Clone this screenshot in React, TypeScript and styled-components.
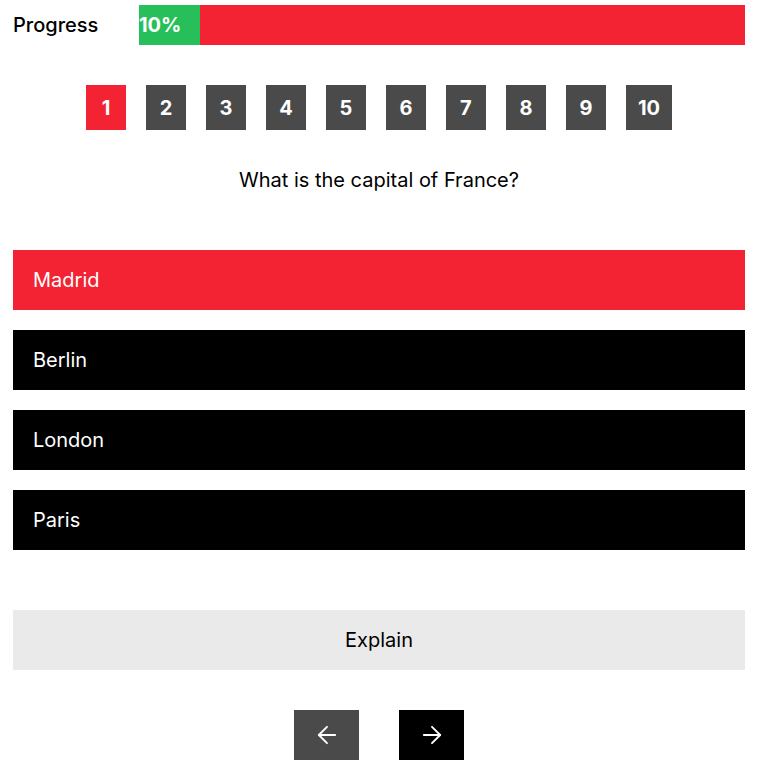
import React from "react";
import styled, { createGlobalStyle } from "styled-components";

const Global = createGlobalStyle`
  html, body { margin: 0; padding: 0; background: #fff; }
  body { font-family: Inter, "Noto Sans", sans-serif; color: #000; }
`;

const Page = styled.div`
  width: 732px;
  margin-left: 13px;
  padding-top: 5px;
  display: flex;
  flex-direction: column;
`;

const ProgressRow = styled.div`
  display: flex;
  align-items: center;
  height: 40px;
`;

const ProgressLabel = styled.div`
  width: 126px;
  font-size: 20px;
  font-weight: 500;
`;

const Track = styled.div`
  flex: 1;
  height: 40px;
  background: #f42333;
  display: flex;
`;

const Fill = styled.div`
  background: #26bf5a;
  height: 100%;
  color: #fff;
  font-weight: 700;
  font-size: 20px;
  display: flex;
  align-items: center;
  white-space: nowrap;
`;

const Numbers = styled.div`
  display: flex;
  justify-content: center;
  gap: 20px;
  margin-top: 40px;
`;

const NumBtn = styled.div<{ $active?: boolean }>`
  min-width: 40px;
  height: 45px;
  padding: 0 12px;
  box-sizing: border-box;
  background: ${(p) => (p.$active ? "#f42333" : "#4a4a4a")};
  color: #fff;
  font-weight: 700;
  font-size: 20px;
  display: flex;
  align-items: center;
  justify-content: center;
`;

const Question = styled.div`
  text-align: center;
  font-size: 20px;
  margin-top: 38px;
  line-height: 24px;
`;

const Options = styled.div`
  display: flex;
  flex-direction: column;
  gap: 20px;
  margin-top: 58px;
`;

const Option = styled.div<{ $selected?: boolean }>`
  height: 60px;
  background: ${(p) => (p.$selected ? "#f42333" : "#000")};
  color: #fff;
  font-size: 20px;
  display: flex;
  align-items: center;
  padding-left: 20px;
`;

const Explain = styled.div`
  height: 60px;
  margin-top: 60px;
  background: #eaeaea;
  font-size: 20px;
  display: flex;
  align-items: center;
  justify-content: center;
`;

const Nav = styled.div`
  display: flex;
  justify-content: center;
  gap: 40px;
  margin-top: 40px;
`;

const NavBtn = styled.div<{ $dark?: boolean }>`
  width: 65px;
  height: 50px;
  background: ${(p) => (p.$dark ? "#000" : "#4a4a4a")};
  display: flex;
  align-items: center;
  justify-content: center;
`;

const Arrow = ({ dir }: { dir: "left" | "right" }) => (
  <svg width="28" height="28" viewBox="0 0 24 24" fill="none" stroke="#fff" strokeWidth="1.6" strokeLinecap="round" strokeLinejoin="round">
    {dir === "left" ? (
      <>
        <path d="M19 12H5" />
        <path d="M12 19l-7-7 7-7" />
      </>
    ) : (
      <>
        <path d="M5 12h14" />
        <path d="M12 5l7 7-7 7" />
      </>
    )}
  </svg>
);

export default function App() {
  const nums = [1, 2, 3, 4, 5, 6, 7, 8, 9, 10];
  const options = ["Madrid", "Berlin", "London", "Paris"];
  const pct = 10;
  return (
    <>
      <Global />
      <Page>
        <ProgressRow>
          <ProgressLabel>Progress</ProgressLabel>
          <Track>
            <Fill style={{ width: `${pct}%` }}>{pct}%</Fill>
          </Track>
        </ProgressRow>
        <Numbers>
          {nums.map((n) => (
            <NumBtn key={n} $active={n === 1}>
              {n}
            </NumBtn>
          ))}
        </Numbers>
        <Question>What is the capital of France?</Question>
        <Options>
          {options.map((o) => (
            <Option key={o} $selected={o === "Madrid"}>
              {o}
            </Option>
          ))}
        </Options>
        <Explain>Explain</Explain>
        <Nav>
          <NavBtn>
            <Arrow dir="left" />
          </NavBtn>
          <NavBtn $dark>
            <Arrow dir="right" />
          </NavBtn>
        </Nav>
      </Page>
    </>
  );
}
